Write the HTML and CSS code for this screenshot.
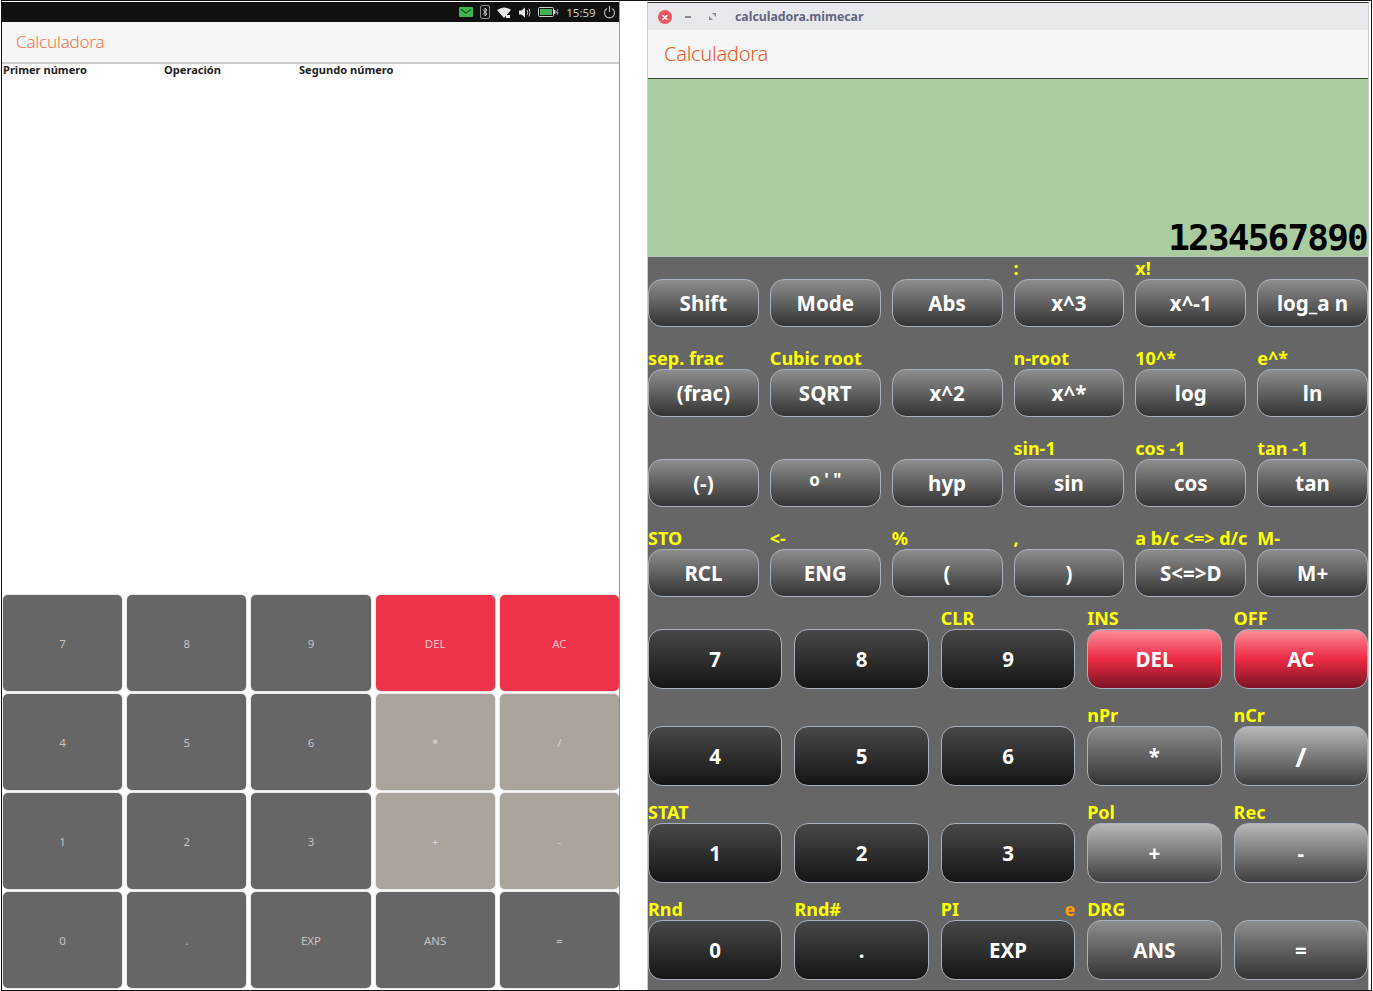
FILE: index.html
```html
<!DOCTYPE html>
<html lang="en">
<head>
    <meta charset="UTF-8">
    <title>Calculadora</title>
    <link rel="stylesheet" href="styles.css">
</head>
<body>
    <div class="screens">
        <section class="phone">
            <div class="status-bar">
                <svg class="st-icon" width="14" height="10" viewBox="0 0 14 10"><rect width="14" height="10" rx="1" fill="#3fb34f"/><path d="M2 2.5 7 6l5-3.5" fill="none" stroke="#0f5a1e" stroke-width="1.2"/></svg>
                <svg class="st-icon" width="10" height="14" viewBox="0 0 10 14"><rect x=".5" y=".5" width="9" height="13" rx="1.5" fill="none" stroke="#8a8a8a"/><path d="M3 4.5 7 9 5 11V3l2 2-4 4.5" fill="none" stroke="#ddd" stroke-width=".9"/></svg>
                <svg class="st-icon" width="14" height="11" viewBox="0 0 14 11"><path d="M0 3Q7-2 14 3L7 11Z" fill="#e8e8e8"/><path d="M9 8h4v3H9z" fill="#e8e8e8"/></svg>
                <svg class="st-icon" width="12" height="11" viewBox="0 0 12 11"><path d="M0 3.5h2.5L6 .5v10L2.5 7.5H0Z" fill="#e8e8e8"/><path d="M8 3q1.500 2.500 0 5M10 1.500q2 4 0 8" fill="none" stroke="#bbb"/></svg>
                <svg class="st-icon" width="21" height="10" viewBox="0 0 21 10"><rect x=".5" y=".5" width="15" height="9" rx="1" fill="none" stroke="#ccc"/><rect x="2" y="2" width="12" height="6" fill="#3fb34f"/><rect x="16" y="3" width="1.500" height="4" fill="#ccc"/><path d="M20 2 18.500 5.500H20L19 8" fill="none" stroke="#ccc" stroke-width=".8"/></svg>
                <span class="clock">15:59</span>
                <svg class="st-icon" width="13" height="13" viewBox="0 0 13 13"><path d="M4 2.500a5 5 0 1 0 5 0M6.500 0v6" fill="none" stroke="#bbb" stroke-width="1.100"/></svg>
            </div>
            <header class="phone-head">Calculadora</header>
            <div class="columns">
                <span class="col-first">Primer número</span>
                <span class="col-op">Operación</span>
                <span class="col-second">Segundo número</span>
            </div>
            <div class="phone-keys">
                <button>7</button><button>8</button><button>9</button><button class="k-red">DEL</button><button class="k-red">AC</button>
                <button>4</button><button>5</button><button>6</button><button class="k-op">*</button><button class="k-op">/</button>
                <button>1</button><button>2</button><button>3</button><button class="k-op">+</button><button class="k-op">-</button>
                <button>0</button><button>.</button><button>EXP</button><button>ANS</button><button>=</button>
            </div>
        </section>

        <section class="app">
            <div class="titlebar">
                <span class="win-close">×</span>
                <span class="win-min"></span>
                <svg class="win-max" width="7" height="7" viewBox="0 0 7 7"><path d="M3 0h4v4zM0 3l4 4H0z" fill="#8b8d94"/></svg>
                <span class="win-title">calculadora.mimecar</span>
            </div>
            <header class="app-head">Calculadora</header>
            <div class="display">1234567890</div>
            <div class="keypad">
                <div class="sci-keys">
                    <div class="key"><span class="lbl"></span><button class="b-grey">Shift</button></div>
                    <div class="key"><span class="lbl"></span><button class="b-grey">Mode</button></div>
                    <div class="key"><span class="lbl"></span><button class="b-grey">Abs</button></div>
                    <div class="key"><span class="lbl">:</span><button class="b-grey">x^3</button></div>
                    <div class="key"><span class="lbl">x!</span><button class="b-grey">x^-1</button></div>
                    <div class="key"><span class="lbl"></span><button class="b-grey">log_a n</button></div>

                    <div class="key"><span class="lbl">sep. frac</span><button class="b-grey">(frac)</button></div>
                    <div class="key"><span class="lbl">Cubic root</span><button class="b-grey">SQRT</button></div>
                    <div class="key"><span class="lbl"></span><button class="b-grey">x^2</button></div>
                    <div class="key"><span class="lbl">n-root</span><button class="b-grey">x^*</button></div>
                    <div class="key"><span class="lbl">10^*</span><button class="b-grey">log</button></div>
                    <div class="key"><span class="lbl">e^*</span><button class="b-grey">ln</button></div>

                    <div class="key"><span class="lbl"></span><button class="b-grey">(-)</button></div>
                    <div class="key"><span class="lbl"></span><button class="b-grey b-deg">o ' "</button></div>
                    <div class="key"><span class="lbl"></span><button class="b-grey">hyp</button></div>
                    <div class="key"><span class="lbl">sin-1</span><button class="b-grey">sin</button></div>
                    <div class="key"><span class="lbl">cos -1</span><button class="b-grey">cos</button></div>
                    <div class="key"><span class="lbl">tan -1</span><button class="b-grey">tan</button></div>

                    <div class="key"><span class="lbl">STO</span><button class="b-grey">RCL</button></div>
                    <div class="key"><span class="lbl">&lt;-</span><button class="b-grey">ENG</button></div>
                    <div class="key"><span class="lbl">%</span><button class="b-grey">(</button></div>
                    <div class="key"><span class="lbl">,</span><button class="b-grey">)</button></div>
                    <div class="key"><span class="lbl">a b/c &lt;=&gt; d/c</span><button class="b-grey">S&lt;=&gt;D</button></div>
                    <div class="key"><span class="lbl">M-</span><button class="b-grey">M+</button></div>
                </div>
                <div class="num-keys">
                    <div class="key"><span class="lbl"></span><button class="b-dark">7</button></div>
                    <div class="key"><span class="lbl"></span><button class="b-dark">8</button></div>
                    <div class="key"><span class="lbl">CLR</span><button class="b-dark">9</button></div>
                    <div class="key"><span class="lbl">INS</span><button class="b-red">DEL</button></div>
                    <div class="key"><span class="lbl">OFF</span><button class="b-red">AC</button></div>

                    <div class="key"><span class="lbl"></span><button class="b-dark">4</button></div>
                    <div class="key"><span class="lbl"></span><button class="b-dark">5</button></div>
                    <div class="key"><span class="lbl"></span><button class="b-dark">6</button></div>
                    <div class="key"><span class="lbl">nPr</span><button class="b-grey">*</button></div>
                    <div class="key"><span class="lbl">nCr</span><button class="b-light b-slash">/</button></div>

                    <div class="key"><span class="lbl">STAT</span><button class="b-dark">1</button></div>
                    <div class="key"><span class="lbl"></span><button class="b-dark">2</button></div>
                    <div class="key"><span class="lbl"></span><button class="b-dark">3</button></div>
                    <div class="key"><span class="lbl">Pol</span><button class="b-light">+</button></div>
                    <div class="key"><span class="lbl">Rec</span><button class="b-light">-</button></div>

                    <div class="key"><span class="lbl">Rnd</span><button class="b-dark">0</button></div>
                    <div class="key"><span class="lbl">Rnd#</span><button class="b-dark">.</button></div>
                    <div class="key"><span class="lbl lbl-split">PI <em>e</em></span><button class="b-dark">EXP</button></div>
                    <div class="key"><span class="lbl">DRG</span><button class="b-grey">ANS</button></div>
                    <div class="key"><span class="lbl"></span><button class="b-grey">=</button></div>
                </div>
            </div>
        </section>
    </div>
</body>
</html>
```

FILE: styles.css
```css
html, body {
    margin: 0;
    height: 991px;
    overflow: hidden;
    background-color: #fff;
}
button {
    font-family: inherit;
    padding: 0;
}
.screens {
    display: flex;
    height: 991px;
    margin: 0 1px;
    box-sizing: border-box;
    border: 1px solid #111;
    font-family: "Noto Sans", sans-serif;
}

/* phone on the left */
.phone {
    width: 617px;
    padding-top: 1px;
    border-right: 1px solid #999;
    display: flex;
    flex-direction: column;
}
.status-bar {
    height: 20px;
    background-color: #111;
    display: flex;
    align-items: center;
    justify-content: flex-end;
    gap: 7.3px;
    padding-right: 3px;
}
.clock {
    font-size: 11.5px;
    color: #ccc;
}
.phone-head {
    height: 40px;
    line-height: 40px;
    padding-left: 14px;
    background-color: #f6f6f6;
    border-bottom: 2px solid #ccc;
    color: #f5734c;
    font-size: 17px;
    font-weight: 300;
    letter-spacing: -0.2px;
}
.columns {
    flex: 1;
    font-size: 11.1px;
    font-weight: 700;
    color: #222;
    display: grid;
    grid-template-columns: 161px 135px 1fr;
    align-content: start;
    padding-left: 1px;
    line-height: 12px;
}
.phone-keys {
    display: grid;
    grid-template-columns: repeat(5, 1fr);
    grid-auto-rows: 96px;
    gap: 3px 5px;
    height: 393px;
    margin-bottom: 2px;
    padding-left: 1px;
}
.phone-keys button {
    border: none;
    border-radius: 5px;
    background-color: #666;
    color: #c4c4c4;
    font-size: 11.5px;
    box-shadow: 0 0 2px rgba(0,0,0,0.35);
}
.phone-keys .k-red {
    background-color: #ee334a;
    color: #f8c0c8;
}
.phone-keys .k-op {
    background-color: #aba49d;
    color: #d8d4d0;
}

/* desktop window on the right */
.app {
    width: 720px;
    margin: 1px 0 0 27px;
    border-top: 1px solid #333;
    border-left: 1px solid #ccc;
    border-right: 1px solid #ccc;
    display: flex;
    flex-direction: column;
}
.titlebar {
    height: 27px;
    background-color: #e6e8ec;
    display: flex;
    align-items: center;
}
.win-close {
    width: 14px;
    height: 14px;
    margin-left: 10px;
    border-radius: 50%;
    background-color: #ee5560;
    color: #fff;
    font-size: 13px;
    font-weight: 700;
    line-height: 14px;
    text-align: center;
}
.win-min {
    width: 6px;
    height: 2px;
    margin-left: 13px;
    background-color: #8b8d94;
}
.win-max {
    margin-left: 18px;
}
.win-title {
    margin-left: 19px;
    font-size: 12.3px;
    font-weight: 700;
    color: #62667c;
}
.app-head {
    height: 48px;
    line-height: 47px;
    padding-left: 16px;
    background-color: #f6f6f6;
    border-bottom: 1px solid #444;
    color: #f0582c;
    font-size: 20px;
    font-weight: 300;
    letter-spacing: -0.25px;
}
.display {
    height: 178px;
    background-color: #abcca1;
    border-bottom: 1px solid #b8c4c8;
    box-sizing: border-box;
    display: flex;
    align-items: flex-end;
    justify-content: flex-end;
    font-family: "DejaVu Sans Mono", monospace;
    font-weight: 700;
    font-size: 36px;
    letter-spacing: -1.8px;
    line-height: 36px;
    padding-right: 1px;
    color: #000;
}
.keypad {
    flex: 1;
    background-color: #666;
}
.sci-keys {
    display: grid;
    grid-template-columns: repeat(6, 1fr);
    column-gap: 11px;
    row-gap: 20px;
}
.num-keys {
    display: grid;
    grid-template-columns: repeat(5, 1fr);
    column-gap: 12px;
    row-gap: 15px;
    margin-top: 10px;
}
.key {
    display: flex;
    flex-direction: column;
    min-width: 0;
}
.lbl {
    height: 22px;
    line-height: 22px;
    font-size: 18px;
    font-weight: 700;
    color: #ff0;
    white-space: nowrap;
}
.lbl-split {
    display: flex;
    justify-content: space-between;
}
.lbl-split em {
    font-style: normal;
    color: #ff9f00;
}
.key button {
    height: 48px;
    border: 1px solid #a6b1bd;
    border-radius: 14px;
    color: #fff;
    font-size: 20.5px;
    font-weight: 700;
}
.num-keys .key button {
    height: 60px;
}
.key .b-deg {
    font-size: 17px;
    padding-bottom: 7px;
}
.key .b-slash {
    font-size: 27px;
}
.b-grey {
    background: linear-gradient(#8e8e8e, #333);
}
.b-dark {
    background: linear-gradient(#484848, #151515);
}
.b-light {
    background: linear-gradient(#b8b8b8, #3e3e3e);
}
.b-red {
    background: linear-gradient(#fb8d9a, #ee2a45 50%, #7a1424);
}
```
